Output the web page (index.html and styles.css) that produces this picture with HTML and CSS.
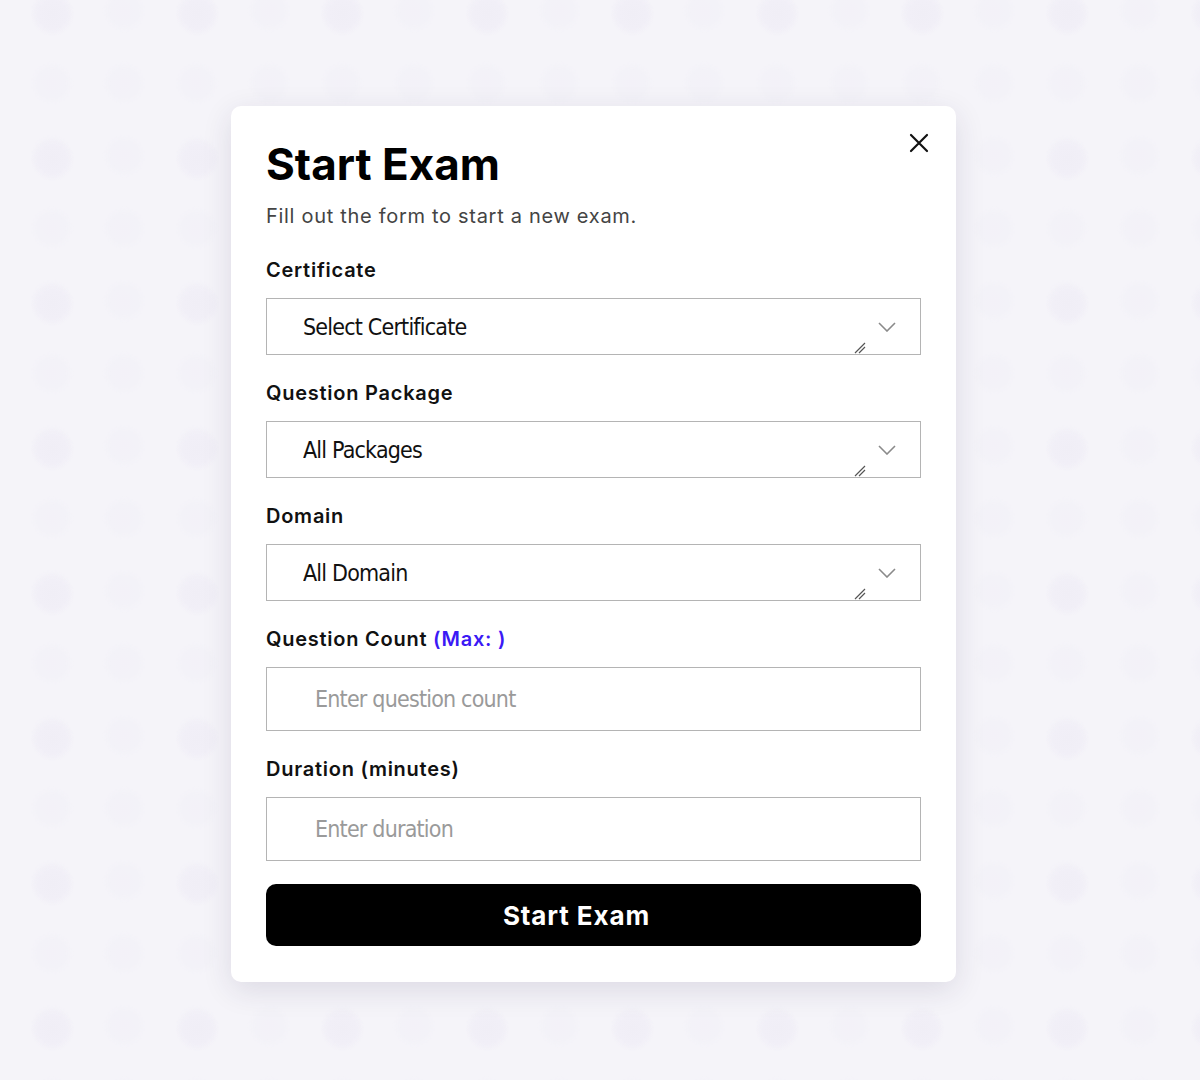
FILE: index.html
```html
<!DOCTYPE html>
<html lang="en">

<head>
    <meta charset="UTF-8">
    <meta name="viewport" content="width=device-width, initial-scale=1.0">
    <title>Start Exam</title>
    <link rel="stylesheet" href="styles.css">
</head>

<body>
    <div class="overlay">
        <div class="modal">
            <button class="close" type="button" aria-label="Close">
                <svg width="20" height="20" viewBox="0 0 20 20">
                    <path d="M2 2 L18 18 M18 2 L2 18" stroke="#111" stroke-width="2.2" stroke-linecap="round" fill="none" />
                </svg>
            </button>

            <h1 class="title">Start Exam</h1>
            <p class="subtitle">Fill out the form to start a new exam.</p>

            <form class="exam-form">
                <div class="field">
                    <label for="certificate">Certificate</label>
                    <div class="select-wrap">
                        <select id="certificate">
                            <option>Select Certificate</option>
                        </select>
                        <svg class="chevron" width="18" height="10" viewBox="0 0 18 10">
                            <path d="M1 1 L9 9 L17 1" stroke="#8a8a8a" stroke-width="1.6" fill="none" />
                        </svg>
                        <svg class="grip" width="12" height="12" viewBox="0 0 12 12">
                            <path d="M1 11 L11 1 M5 11 L11 5" stroke="#555" stroke-width="1.2" fill="none" />
                        </svg>
                    </div>
                </div>

                <div class="field">
                    <label for="package">Question Package</label>
                    <div class="select-wrap">
                        <select id="package">
                            <option>All Packages</option>
                        </select>
                        <svg class="chevron" width="18" height="10" viewBox="0 0 18 10">
                            <path d="M1 1 L9 9 L17 1" stroke="#8a8a8a" stroke-width="1.6" fill="none" />
                        </svg>
                        <svg class="grip" width="12" height="12" viewBox="0 0 12 12">
                            <path d="M1 11 L11 1 M5 11 L11 5" stroke="#555" stroke-width="1.2" fill="none" />
                        </svg>
                    </div>
                </div>

                <div class="field">
                    <label for="domain">Domain</label>
                    <div class="select-wrap">
                        <select id="domain">
                            <option>All Domain</option>
                        </select>
                        <svg class="chevron" width="18" height="10" viewBox="0 0 18 10">
                            <path d="M1 1 L9 9 L17 1" stroke="#8a8a8a" stroke-width="1.6" fill="none" />
                        </svg>
                        <svg class="grip" width="12" height="12" viewBox="0 0 12 12">
                            <path d="M1 11 L11 1 M5 11 L11 5" stroke="#555" stroke-width="1.2" fill="none" />
                        </svg>
                    </div>
                </div>

                <div class="field">
                    <label for="count">Question Count <span class="max">(Max: )</span></label>
                    <input id="count" type="number" placeholder="Enter question count">
                </div>

                <div class="field">
                    <label for="duration">Duration (minutes)</label>
                    <input id="duration" type="number" placeholder="Enter duration">
                </div>

                <button class="submit" type="button">Start Exam</button>
            </form>
        </div>
    </div>
</body>

</html>
```

FILE: styles.css
```css
body {
    margin: 0;
    font-family: Inter, "DejaVu Sans", sans-serif;
    background-color: #f5f4f9;
    background-image:
        radial-gradient(circle, #f0eef6 0, #f1eff7 14px, rgba(245, 244, 249, 0) 22px),
        radial-gradient(circle, #f3f1f8 0, #f3f2f8 14px, rgba(245, 244, 249, 0) 22px);
    background-size: 145px 145px, 72.5px 72.5px;
    background-position: -20px -58px, 88px 47px;
}

.overlay {
    height: 1080px;
    overflow: hidden;
}

.modal {
    position: relative;
    width: 725px;
    box-sizing: border-box;
    margin: 106px 0 0 231px;
    padding: 33px 35px 36px 35px;
    background: #ffffff;
    border-radius: 10px;
    box-shadow: 0 8px 30px rgba(40, 30, 70, 0.12);
}

.close {
    position: absolute;
    top: 27px;
    right: 27px;
    width: 20px;
    height: 20px;
    padding: 0;
    border: none;
    background: none;
    cursor: pointer;
}

.title {
    margin: 0;
    font-size: 44px;
    line-height: 50px;
    font-weight: 700;
    color: #000;
}

.subtitle {
    margin: 15px 0 0 0;
    font-size: 20px;
    line-height: 24px;
    letter-spacing: 0.7px;
    color: #444;
}

.exam-form {
    margin-top: 30px;
}

.field {
    margin-bottom: 26px;
}

.field label {
    display: block;
    font-size: 20px;
    line-height: 24px;
    font-weight: 600;
    letter-spacing: 0.75px;
    color: #111;
    margin-bottom: 16px;
}

.max {
    color: #3b19f5;
}

.select-wrap {
    position: relative;
}

.select-wrap select,
.field input {
    display: block;
    width: 100%;
    box-sizing: border-box;
    border: 1px solid #b4b4b4;
    background: #fff;
    color: #111;
    font-family: "Liberation Sans Narrow", "DejaVu Sans Condensed", sans-serif;
    font-size: 23px;
    letter-spacing: -0.8px;
    outline: none;
}

.select-wrap select {
    height: 57px;
    padding: 0 60px 0 36px;
    -webkit-appearance: none;
    appearance: none;
}

.field input {
    height: 64px;
    padding: 0 20px 0 48px;
}

.field input::placeholder {
    color: #9a9a9a;
}

.chevron {
    position: absolute;
    right: 25px;
    top: 24px;
}

.grip {
    position: absolute;
    right: 55px;
    bottom: 1px;
}

.submit {
    display: block;
    width: 100%;
    height: 62px;
    margin-top: -3px;
    padding: 0 34px 0 0;
    border: none;
    border-radius: 10px;
    background: #000;
    color: #fff;
    font-family: Inter, "DejaVu Sans", sans-serif;
    font-size: 26px;
    font-weight: 700;
    letter-spacing: 0.9px;
    cursor: pointer;
}
```
